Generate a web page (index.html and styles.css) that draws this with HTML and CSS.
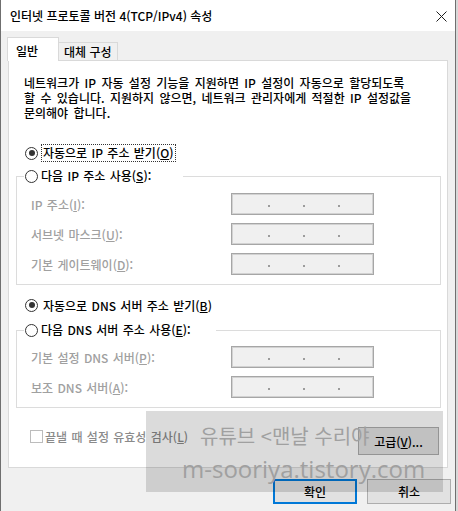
FILE: index.html
```html
<!DOCTYPE html>
<html lang="ko">
<head>
    <meta charset="UTF-8">
    <title>인터넷 프로토콜 버전 4(TCP/IPv4) 속성</title>
    <link rel="stylesheet" href="styles.css">
</head>
<body>

    <div class="window">
        <div class="titlebar">
            <span class="title">인터넷 프로토콜 버전 4(TCP/IPv4) 속성</span>
            <svg class="close" width="11" height="11" viewBox="0 0 11 11">
                <path d="M0.5 0.5L10.5 10.5M10.5 0.5L0.5 10.5" stroke="#1e1e1e" stroke-width="1"/>
            </svg>
        </div>

        <div class="body">
            <!-- Tabs -->
            <div class="tabs">
                <div class="tab active">일반</div>
                <div class="tab">대체 구성</div>
            </div>

            <div class="panel">
                <p class="desc">네트워크가 IP 자동 설정 기능을 지원하면 IP 설정이 자동으로 할당되도록<br>할 수 있습니다. 지원하지 않으면, 네트워크 관리자에게 적절한 IP 설정값을<br>문의해야 합니다.</p>

                <!-- IP address -->
                <div class="radio-row ip-auto">
                    <span class="radio checked"></span>
                    <span class="focus">자동으로 IP 주소 받기(<u>O</u>)</span>
                </div>

                <fieldset class="group ip-group">
                    <legend><span class="radio"></span>다음 IP 주소 사용(<u>S</u>):</legend>
                    <div class="field">
                        <span class="label">IP 주소(<u>I</u>):</span>
                        <div class="ipbox"><i></i><i></i><i></i></div>
                    </div>
                    <div class="field">
                        <span class="label">서브넷 마스크(<u>U</u>):</span>
                        <div class="ipbox"><i></i><i></i><i></i></div>
                    </div>
                    <div class="field">
                        <span class="label">기본 게이트웨이(<u>D</u>):</span>
                        <div class="ipbox"><i></i><i></i><i></i></div>
                    </div>
                </fieldset>

                <!-- DNS -->
                <div class="radio-row dns-auto">
                    <span class="radio checked"></span>
                    <span class="text">자동으로 DNS 서버 주소 받기(<u>B</u>)</span>
                </div>

                <fieldset class="group dns-group">
                    <legend><span class="radio"></span>다음 DNS 서버 주소 사용(<u>E</u>):</legend>
                    <div class="field">
                        <span class="label">기본 설정 DNS 서버(<u>P</u>):</span>
                        <div class="ipbox"><i></i><i></i><i></i></div>
                    </div>
                    <div class="field">
                        <span class="label">보조 DNS 서버(<u>A</u>):</span>
                        <div class="ipbox"><i></i><i></i><i></i></div>
                    </div>
                </fieldset>

                <div class="bottom-row">
                    <div class="check-row">
                        <span class="checkbox"></span>
                        <span>끝낼 때 설정 유효성 검사(<u>L</u>)</span>
                    </div>
                    <button class="btn advanced">고급(<u>V</u>)...</button>
                </div>
            </div>

            <div class="actions">
                <button class="btn default">확인</button>
                <button class="btn">취소</button>
            </div>
        </div>

        <!-- watermark over the dialog -->
        <div class="watermark">
            <div class="wm-line1">유튜브 &lt;맨날 수리야</div>
            <div class="wm-line2">m-sooriya.tistory.com</div>
        </div>
    </div>

</body>
</html>
```

FILE: styles.css
```css
/* General */
body {
    margin: 0;
    background: #d8d8d8;
    font-family: "Noto Sans CJK KR", "Noto Sans", sans-serif;
    font-size: 12px;
    font-weight: 500;
    color: #000;
}

.window {
    position: relative;
    width: 456px;
    height: 511px;
    box-sizing: border-box;
    background: #f0f0f0;
    border-left: 1px solid #6f6f6f;
    border-right: 1px solid #6f6f6f;
    overflow: hidden;
}

/* Title bar */
.titlebar {
    height: 31px;
    background: #fff;
    display: flex;
    align-items: center;
    justify-content: space-between;
    padding: 0 8px 0 9px;
}

.title {
    font-size: 12px;
    color: #000;
}

.close {
    margin-top: 1px;
}

/* Tabs */
.body {
    padding-top: 6px;
}

.tabs {
    display: flex;
    align-items: flex-end;
    padding-left: 6px;
    height: 23px;
}

.tab {
    box-sizing: border-box;
    height: 18px;
    padding: 0 5px;
    background: #f0f0f0;
    border: 1px solid #d9d9d9;
    border-left: none;
    border-bottom: none;
    line-height: 17px;
}

.tab.active {
    position: relative;
    z-index: 1;
    height: 24px;
    margin-bottom: -1px;
    width: 52px;
    padding-left: 8px;
    background: #fff;
    border-left: 1px solid #d9d9d9;
    line-height: 25px;
}

.panel {
    box-sizing: border-box;
    margin-left: 7px;
    width: 440px;
    height: 408px;
    background: #fff;
    border: 1px solid #d9d9d9;
}

.desc {
    margin: 14px 0 0 15px;
    line-height: 15px;
    word-spacing: 2px;
    color: #000;
}

/* Radio buttons */
.radio-row {
    display: flex;
    align-items: center;
    height: 18px;
    margin-left: 16px;
}

.ip-auto {
    margin-top: 24px;
}

.dns-auto {
    margin-top: 11px;
}

.radio {
    position: relative;
    display: inline-block;
    box-sizing: border-box;
    width: 13px;
    height: 13px;
    border: 1px solid #333;
    border-radius: 50%;
    background: #fff;
    margin-right: 3px;
    vertical-align: -2px;
}

.radio.checked::after {
    content: "";
    position: absolute;
    left: 2.5px;
    top: 2.5px;
    width: 6px;
    height: 6px;
    border-radius: 50%;
    background: #333;
}

.focus {
    border: 1px dotted #333;
    padding: 0 1px;
    line-height: 16px;
    word-spacing: 1px;
}

.radio-row .text {
    padding-left: 2px;
    word-spacing: 1px;
}

/* Group boxes */
.group {
    box-sizing: border-box;
    width: 425px;
    margin: 6px 0 0 7px;
    padding: 9px 0 9px 7px;
    border: 1px solid #dcdcdc;
}

.group legend {
    padding: 0;
    height: 16px;
    line-height: 16px;
    width: 159px;
    background: #fff;
    word-spacing: 1px;
}

.group legend .radio {
    margin-left: 1px;
}

.dns-group {
    margin-top: 8px;
    padding-top: 8px;
}

.dns-group legend {
    width: 192px;
}

.field {
    display: flex;
    align-items: center;
    height: 22px;
    margin-bottom: 8px;
}

.field:last-child {
    margin-bottom: 0;
}

.label {
    width: 207px;
    padding-left: 7px;
    box-sizing: border-box;
    color: #a0a0a0;
    word-spacing: 1px;
}

.ipbox {
    box-sizing: border-box;
    width: 143px;
    height: 22px;
    background: #f0f0f0;
    border: 1px solid #a6a6a6;
    box-shadow: inset 0 0 0 1px #d2d2d2;
    display: flex;
    align-items: center;
    gap: 33px;
    padding: 3px 0 0 36px;
}

.ipbox i {
    width: 2px;
    height: 2px;
    background: #9c9c9c;
}

/* Checkbox + advanced */
.bottom-row {
    display: flex;
    justify-content: space-between;
    align-items: flex-start;
    margin: 19px 8px 0 21px;
}

.check-row {
    display: flex;
    align-items: center;
    height: 18px;
    color: #8a8a8a;
    word-spacing: 1px;
}

.checkbox {
    box-sizing: border-box;
    width: 13px;
    height: 13px;
    border: 1px solid #bcbcbc;
    background: #fff;
    margin-right: 2px;
}

.btn {
    box-sizing: border-box;
    font-family: inherit;
    font-size: 12px;
    font-weight: 500;
    color: #000;
    background: #e1e1e1;
    border: 1px solid #adadad;
    padding: 0;
    width: 84px;
    height: 25px;
}

.btn.advanced {
    width: 81px;
    height: 28px;
}

.btn.default {
    border: 1px solid #0078d7;
    box-shadow: inset 0 0 0 1px #0078d7;
}

.actions {
    display: flex;
    justify-content: flex-end;
    gap: 10px;
    margin-top: 11px;
    padding-right: 4px;
}

/* Watermark */
.watermark {
    position: absolute;
    left: 145px;
    top: 411px;
    width: 297px;
    height: 81px;
    background: rgba(0, 0, 0, 0.14);
    color: #a0a0a0;
    font-weight: 400;
}

.wm-line1 {
    margin: 13px 0 0 54px;
    font-size: 20px;
    line-height: 24px;
}

.wm-line2 {
    margin: 8px 0 0 36px;
    font-size: 24px;
    line-height: 26px;
    font-family: "Open Sans", "Noto Sans", sans-serif;
}
```
